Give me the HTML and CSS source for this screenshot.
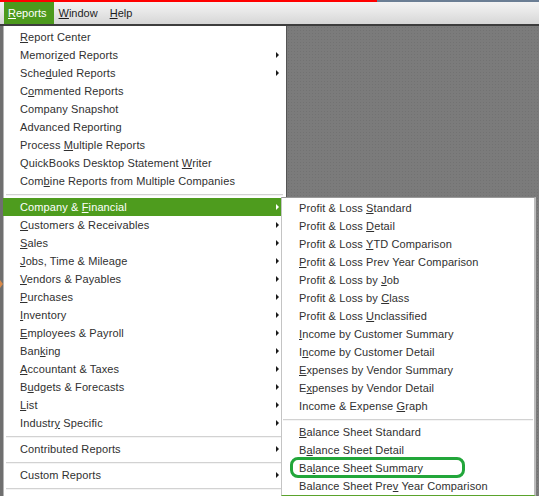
FILE: index.html
```html
<!DOCTYPE html>
<html>
<head>
<meta charset="utf-8">
<link rel="stylesheet" href="styles.css">
</head>
<body>
<div class="screen">
  <div class="topline"><div class="topline-red"></div></div>
  <div class="menubar">
    <span class="mb-item mb-active"><u>R</u>eports</span>
    <span class="mb-item"><u>W</u>indow</span>
    <span class="mb-item mb-help"><u>H</u>elp</span>
  </div>
  <div class="workspace">
    <div class="leftstrip"><span class="orange-mark"></span></div>
    <div class="dropdown">
      <div class="item"><u>R</u>eport Center</div>
      <div class="item sub">Memori<u>z</u>ed Reports</div>
      <div class="item sub">Sche<u>d</u>uled Reports</div>
      <div class="item">C<u>o</u>mmented Reports</div>
      <div class="item">Company Snapshot</div>
      <div class="item">Advanced Reporting</div>
      <div class="item">Process <u>M</u>ultiple Reports</div>
      <div class="item">QuickBooks Desktop Statement <u>W</u>riter</div>
      <div class="item">Com<u>b</u>ine Reports from Multiple Companies</div>
      <div class="sep"></div>
      <div class="item sub active">Company &amp; <u>F</u>inancial</div>
      <div class="item sub"><u>C</u>ustomers &amp; Receivables</div>
      <div class="item sub"><u>S</u>ales</div>
      <div class="item sub"><u>J</u>obs, Time &amp; Mileage</div>
      <div class="item sub"><u>V</u>endors &amp; Payables</div>
      <div class="item sub"><u>P</u>urchases</div>
      <div class="item sub"><u>I</u>nventory</div>
      <div class="item sub"><u>E</u>mployees &amp; Payroll</div>
      <div class="item sub">Ban<u>k</u>ing</div>
      <div class="item sub"><u>A</u>ccountant &amp; Taxes</div>
      <div class="item sub">B<u>u</u>dgets &amp; Forecasts</div>
      <div class="item sub"><u>L</u>ist</div>
      <div class="item sub">Industr<u>y</u> Specific</div>
      <div class="sep"></div>
      <div class="item sub">Contributed Reports</div>
      <div class="sep"></div>
      <div class="item sub">Custom Reports</div>
      <div class="sep"></div>
    </div>
    <div class="canvas"></div>
    <div class="submenu">
      <div class="item">Profit &amp; Loss <u>S</u>tandard</div>
      <div class="item">Profit &amp; Loss <u>D</u>etail</div>
      <div class="item">Profit &amp; Loss <u>Y</u>TD Comparison</div>
      <div class="item"><u>P</u>rofit &amp; Loss Prev Year Comparison</div>
      <div class="item">Profit &amp; Loss by <u>J</u>ob</div>
      <div class="item">Profit &amp; Loss by <u>C</u>lass</div>
      <div class="item">Profit &amp; Loss <u>U</u>nclassified</div>
      <div class="item"><u>I</u>ncome by Customer Summary</div>
      <div class="item">I<u>n</u>come by Customer Detail</div>
      <div class="item"><u>E</u>xpenses by Vendor Summary</div>
      <div class="item">E<u>x</u>penses by Vendor Detail</div>
      <div class="item">Income &amp; Expense <u>G</u>raph</div>
      <div class="sep"></div>
      <div class="item"><u>B</u>alance Sheet Standard</div>
      <div class="item">B<u>a</u>lance Sheet Detail</div>
      <div class="item">Ba<u>l</u>ance Sheet Summary</div>
      <div class="item">Balance Sheet Pre<u>v</u> Year Comparison</div>
    </div>
    <div class="annotation"></div>
  </div>
</div>
</body>
</html>
```
FILE: styles.css
```css
html, body {
  margin: 0;
  padding: 0;
  background: #7a7a7a;
}
body {
  font-family: "Liberation Sans", Arial, sans-serif;
  font-size: 11px;
  color: #303030;
}
.screen {
  width: 539px;
  height: 496px;
  overflow: hidden;
  display: flex;
  flex-direction: column;
}
.topline {
  height: 2px;
  background: #6b7e94;
  flex: none;
}
.topline-red {
  width: 377px;
  height: 2px;
  background: #ff0000;
}
.menubar {
  height: 22px;
  flex: none;
  display: flex;
  align-items: stretch;
  padding-left: 4px;
  background: linear-gradient(#f3f3f3, #e6e6e6 50%, #d6d6d6);
  border-bottom: 2px solid #3d3d3d;
}
.mb-item {
  display: flex;
  align-items: center;
  padding: 0 6px 0 5px;
  font-size: 11px;
  color: #1e1e1e;
}
.mb-item:first-child {
  padding-left: 4px;
  padding-right: 7px;
}
.mb-help {
  padding-left: 6px;
}
.mb-active {
  background: #4c9a1d;
  color: #ffffff;
}
.workspace {
  flex: 1;
  display: flex;
  position: relative;
  min-height: 0;
}
.leftstrip {
  width: 3px;
  flex: none;
  background: #6f6f6f;
  position: relative;
}
.orange-mark {
  position: absolute;
  left: 0;
  top: 254px;
  width: 0;
  height: 0;
  border-top: 4px solid transparent;
  border-bottom: 4px solid transparent;
  border-left: 3px solid #d98a4a;
}
.dropdown {
  flex: none;
  background: #ffffff;
  border-left: 1px solid #b5b5b5;
  padding-top: 2px;
  box-sizing: border-box;
  width: 283px;
}
.item {
  height: 18px;
  line-height: 18px;
  padding-left: 16px;
  position: relative;
  white-space: nowrap;
  letter-spacing: 0.12px;
}
.item u {
  text-decoration: underline;
  text-underline-offset: 1px;
}
.dropdown .item.sub::after {
  content: "";
  position: absolute;
  right: 7px;
  top: 6px;
  width: 0;
  height: 0;
  border-top: 3px solid transparent;
  border-bottom: 3px solid transparent;
  border-left: 3px solid #1a1a1a;
}
.dropdown .item.active {
  background: #4e9c1e;
  color: #ffffff;
  margin-left: -1px;
  padding-left: 17px;
}
.dropdown .item.active::after {
  border-left-color: #ffffff;
}
.sep {
  height: 8px;
  position: relative;
}
.sep::before {
  content: "";
  position: absolute;
  left: 2px;
  right: 3px;
  top: 4px;
  height: 1px;
  background: #d2d2d2;
}
.sep::after {
  content: "";
  position: absolute;
  left: 2px;
  right: 3px;
  top: 5px;
  height: 1px;
  background: #f4f4f4;
}
.canvas {
  flex: 1;
  background-color: #7b7b7b;
  background-image: radial-gradient(#727272 0.6px, transparent 0.8px);
  background-size: 3px 3px;
  border-left: 1px solid #555555;
}
.submenu {
  position: absolute;
  left: 281px;
  top: 171px;
  width: 252px;
  background: #ffffff;
  border-left: 1px solid #c4c4c4;
  border-top: 1px solid #9a9a9a;
  border-right: 2px solid #bcbcbc;
  border-bottom: 1px solid #5aa32c;
  padding-top: 1px;
}
.submenu .item {
  padding-left: 17px;
}
.submenu .sep::before,
.submenu .sep::after {
  left: 1px;
  right: 1px;
}
.annotation {
  position: absolute;
  left: 290px;
  top: 431px;
  width: 169px;
  height: 15px;
  border: 3px solid #22a63a;
  border-radius: 8px;
}
```
